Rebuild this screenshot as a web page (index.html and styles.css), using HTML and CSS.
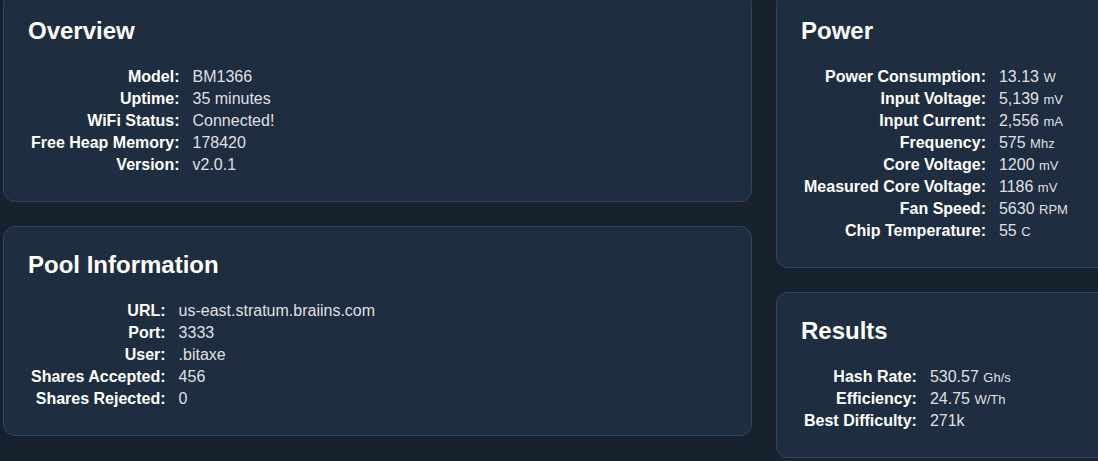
FILE: index.html
```html
<!DOCTYPE html>
<html lang="en">
<head>
  <meta charset="UTF-8">
  <meta name="viewport" content="width=device-width, initial-scale=1.0">
  <link rel="stylesheet" href="styles.css">
  <title>Bitaxe Dashboard</title>
</head>
<body>

  <main class="dashboard">
    <div class="column">
      <div class="card">
        <h2>Overview</h2>
        <table>
          <tr><td class="label">Model:</td><td>BM1366</td></tr>
          <tr><td class="label">Uptime:</td><td>35 minutes</td></tr>
          <tr><td class="label">WiFi Status:</td><td>Connected!</td></tr>
          <tr><td class="label">Free Heap Memory:</td><td>178420</td></tr>
          <tr><td class="label">Version:</td><td>v2.0.1</td></tr>
        </table>
      </div>

      <div class="card">
        <h2>Pool Information</h2>
        <table>
          <tr><td class="label">URL:</td><td>us-east.stratum.braiins.com</td></tr>
          <tr><td class="label">Port:</td><td>3333</td></tr>
          <tr><td class="label">User:</td><td>.bitaxe</td></tr>
          <tr><td class="label">Shares Accepted:</td><td>456</td></tr>
          <tr><td class="label">Shares Rejected:</td><td>0</td></tr>
        </table>
      </div>
    </div>

    <div class="column">
      <div class="card">
        <h2>Power</h2>
        <table>
          <tr><td class="label">Power Consumption:</td><td>13.13 <small>W</small></td></tr>
          <tr><td class="label">Input Voltage:</td><td>5,139 <small>mV</small></td></tr>
          <tr><td class="label">Input Current:</td><td>2,556 <small>mA</small></td></tr>
          <tr><td class="label">Frequency:</td><td>575 <small>Mhz</small></td></tr>
          <tr><td class="label">Core Voltage:</td><td>1200 <small>mV</small></td></tr>
          <tr><td class="label">Measured Core Voltage:</td><td>1186 <small>mV</small></td></tr>
          <tr><td class="label">Fan Speed:</td><td>5630 <small>RPM</small></td></tr>
          <tr><td class="label">Chip Temperature:</td><td>55 <small>C</small></td></tr>
        </table>
      </div>

      <div class="card">
        <h2>Results</h2>
        <table>
          <tr><td class="label">Hash Rate:</td><td>530.57 <small>Gh/s</small></td></tr>
          <tr><td class="label">Efficiency:</td><td>24.75 <small>W/Th</small></td></tr>
          <tr><td class="label">Best Difficulty:</td><td>271k</td></tr>
        </table>
      </div>
    </div>
  </main>

</body>
</html>
```

FILE: styles.css
```css
body {
  margin: 0;
  background-color: #18212e;
  color: rgba(255, 255, 255, 0.87);
  font-family: "Liberation Sans", Arial, sans-serif;
  font-size: 16px;
  overflow: hidden;
}

/* page is shown scrolled a little down */
.dashboard {
  display: grid;
  grid-template-columns: 749px 360px;
  column-gap: 24px;
  align-items: start;
  margin: -8px 0 0 3px;
}

.column {
  display: flex;
  flex-direction: column;
  gap: 24px;
}

.card {
  background-color: #1f2d40;
  border: 1px solid #304562;
  border-radius: 12px;
  padding: 24px;
}

.card h2 {
  margin: 0 0 21px;
  font-size: 24px;
  line-height: 27px;
  font-weight: bold;
  color: #fff;
}

table {
  border-spacing: 2px;
}

td {
  padding: 1px;
  line-height: 18px;
  white-space: nowrap;
}

td.label {
  text-align: right;
  font-weight: bold;
  color: #fff;
  padding-right: 10px;
}

small {
  font-size: 13px;
  line-height: 1;
}
```
